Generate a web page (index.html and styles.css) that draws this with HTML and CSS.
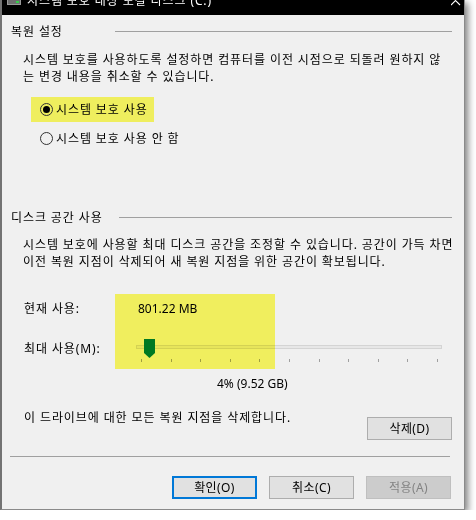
FILE: index.html
```html
<!DOCTYPE html>
<html lang="ko">
<head>
  <meta charset="UTF-8" />
  <title>시스템 보호 대상 로컬 디스크 (C:)</title>
  <link rel="stylesheet" href="styles.css">
</head>
<body>
  <div class="window">
    <div class="titlebar">
      <svg class="title-icon" width="14" height="6" viewBox="0 0 14 6">
        <rect x="0" y="0" width="14" height="5" fill="#9a9a9a" />
        <rect x="1" y="0" width="12" height="4" fill="#6e6e6e" />
        <rect x="9" y="1" width="3" height="2" fill="#35d04a" />
      </svg>
      <span class="title-text">시스템 보호 대상 로컬 디스크 (C:)</span>
      <svg class="title-close" width="10" height="6" viewBox="0 0 10 6">
        <path d="M0 -4 L9 5 M9 -4 L0 5" stroke="#fff" stroke-width="1.1" fill="none" />
      </svg>
    </div>

    <div class="content">
      <div class="group-head">
        <span class="group-label">복원 설정</span>
        <span class="group-line"></span>
      </div>
      <p class="desc">시스템 보호를 사용하도록 설정하면 컴퓨터를 이전 시점으로 되돌려 원하지 않<br>는 변경 내용을 취소할 수 있습니다.</p>

      <div class="radios">
        <label class="radio highlight"><span class="radio-dot checked"></span>시스템 보호 사용</label>
        <label class="radio"><span class="radio-dot"></span>시스템 보호 사용 안 함</label>
      </div>

      <div class="group-head second">
        <span class="group-label wide">디스크 공간 사용</span>
        <span class="group-line"></span>
      </div>
      <p class="desc tight">시스템 보호에 사용할 최대 디스크 공간을 조정할 수 있습니다. 공간이 가득 차면<br>이전 복원 지점이 삭제되어 새 복원 지점을 위한 공간이 확보됩니다.</p>

      <div class="usage">
        <div class="usage-row">
          <span>현재 사용:</span>
          <span class="usage-value">801.22 MB</span>
        </div>
        <div class="usage-row slider-row">
          <span class="slider-label">최대 사용(M):</span>
          <div class="slider">
            <div class="track"></div>
            <svg class="thumb" width="11" height="19" viewBox="0 0 11 19">
              <path d="M0 0 H11 V14 L5.5 19 L0 14 Z" fill="#007a55" />
            </svg>
            <div class="ticks">
              <span></span><span></span><span></span><span></span><span></span><span></span>
              <span></span><span></span><span></span><span></span><span></span>
            </div>
          </div>
        </div>
      </div>

      <div class="percent">4% (9.52 GB)</div>

      <div class="delete-row">
        <span>이 드라이브에 대한 모든 복원 지점을 삭제합니다.</span>
        <button class="btn">삭제(D)</button>
      </div>

      <div class="separator"></div>

      <div class="actions">
        <button class="btn default">확인(O)</button>
        <button class="btn">취소(C)</button>
        <button class="btn" disabled>적용(A)</button>
      </div>
    </div>

    <div class="marker"></div>
  </div>
</body>
</html>
```

FILE: styles.css
```css
body {
  margin: 0;
  background: #fff;
  font-family: "Noto Sans", "Noto Sans CJK KR", sans-serif;
  font-size: 12px;
  line-height: 17px;
  letter-spacing: 0.9px;
  color: #000;
}

.window {
  position: relative;
  width: 465px;
  height: 510px;
  box-sizing: border-box;
  background: #f0f0f0;
  border-left: 2px solid #737373;
  border-right: 1px solid #8a8a8a;
  border-bottom: 1px solid #8a8a8a;
  box-shadow: 3px 3px 7px rgba(0, 0, 0, 0.5);
}

/* title bar, cut off at the top of the shot */
.titlebar {
  display: flex;
  height: 15px;
  overflow: hidden;
  background: #000;
  color: #fff;
}

.title-icon {
  margin-left: 5px;
  flex: none;
}

.title-text {
  margin-left: 6px;
  margin-top: -8px;
  white-space: nowrap;
}

.title-close {
  margin-left: auto;
  margin-right: 3px;
  flex: none;
}

.content {
  padding: 0 12px 0 9px;
}

.group-head {
  display: flex;
  align-items: center;
  height: 17px;
  margin-top: 8px;
}

.group-head.second {
  margin-top: 58px;
}

.group-label {
  width: 104px;
  flex: none;
}

.group-label.wide {
  width: 108px;
}

.group-line {
  flex: 1;
  border-top: 1px solid #a0a0a0;
}

.desc {
  margin: 11px 0 0;
  padding-left: 12px;
  white-space: nowrap;
}

.desc.tight {
  margin-top: 10px;
}

.radios {
  display: flex;
  flex-direction: column;
  align-items: flex-start;
  gap: 4px;
  margin-top: 12px;
}

.radio {
  display: flex;
  align-items: center;
  gap: 3px;
  height: 25px;
  margin-left: 20px;
  padding: 0 6px 0 9px;
}

.highlight {
  background: #efee5e;
}

.radio-dot {
  position: relative;
  width: 13px;
  height: 13px;
  box-sizing: border-box;
  border: 1px solid #333;
  border-radius: 50%;
}

.radio-dot.checked::after {
  content: "";
  position: absolute;
  left: 2px;
  top: 2px;
  width: 7px;
  height: 7px;
  border-radius: 50%;
  background: #000;
}

.usage {
  margin-top: 30px;
}

.usage-row {
  display: grid;
  grid-template-columns: 112px 1fr;
  padding-left: 13px;
}

.usage-value {
  padding-left: 2px;
  letter-spacing: 0;
}

.slider-row {
  margin-top: 22px;
}

.slider-label {
  padding-top: 1px;
}

.slider {
  position: relative;
  width: 306px;
  padding-top: 6px;
}

.track {
  height: 4px;
  box-sizing: border-box;
  background: #e7e7e7;
  border: 1px solid #d4d4d4;
}

.thumb {
  position: absolute;
  left: 8px;
  top: 0;
}

.ticks {
  display: flex;
  justify-content: space-between;
  height: 3px;
  margin: 10px 4px 0 5px;
}

.ticks span {
  width: 1px;
  height: 3px;
  background: #a0a0a0;
}

.percent {
  margin-top: 13px;
  padding-left: 206px;
  letter-spacing: 0;
}

.delete-row {
  display: flex;
  justify-content: space-between;
  align-items: flex-start;
  margin-top: 17px;
  padding-left: 13px;
}

.delete-row .btn {
  margin-top: 8px;
}

.separator {
  width: 440px;
  margin: 16px 0 0 -1px;
  border-top: 1px solid #a0a0a0;
}

.actions {
  display: flex;
  justify-content: flex-end;
  gap: 12px;
  margin-top: 19px;
  padding-right: 1px;
}

.btn {
  width: 85px;
  height: 23px;
  box-sizing: border-box;
  padding: 0;
  border: 1px solid #adadad;
  background: #e1e1e1;
  font: inherit;
  line-height: 20px;
  letter-spacing: 0.4px;
  color: #000;
}

.btn.default {
  border: 2px solid #0078d7;
}

.btn:disabled {
  color: #838383;
  background: #cccccc;
  border-color: #bfbfbf;
}

/* yellow marker drawn over the usage area */
.marker {
  position: absolute;
  left: 113px;
  top: 294px;
  width: 160px;
  height: 75px;
  background: #fffd64;
  mix-blend-mode: multiply;
}
```
